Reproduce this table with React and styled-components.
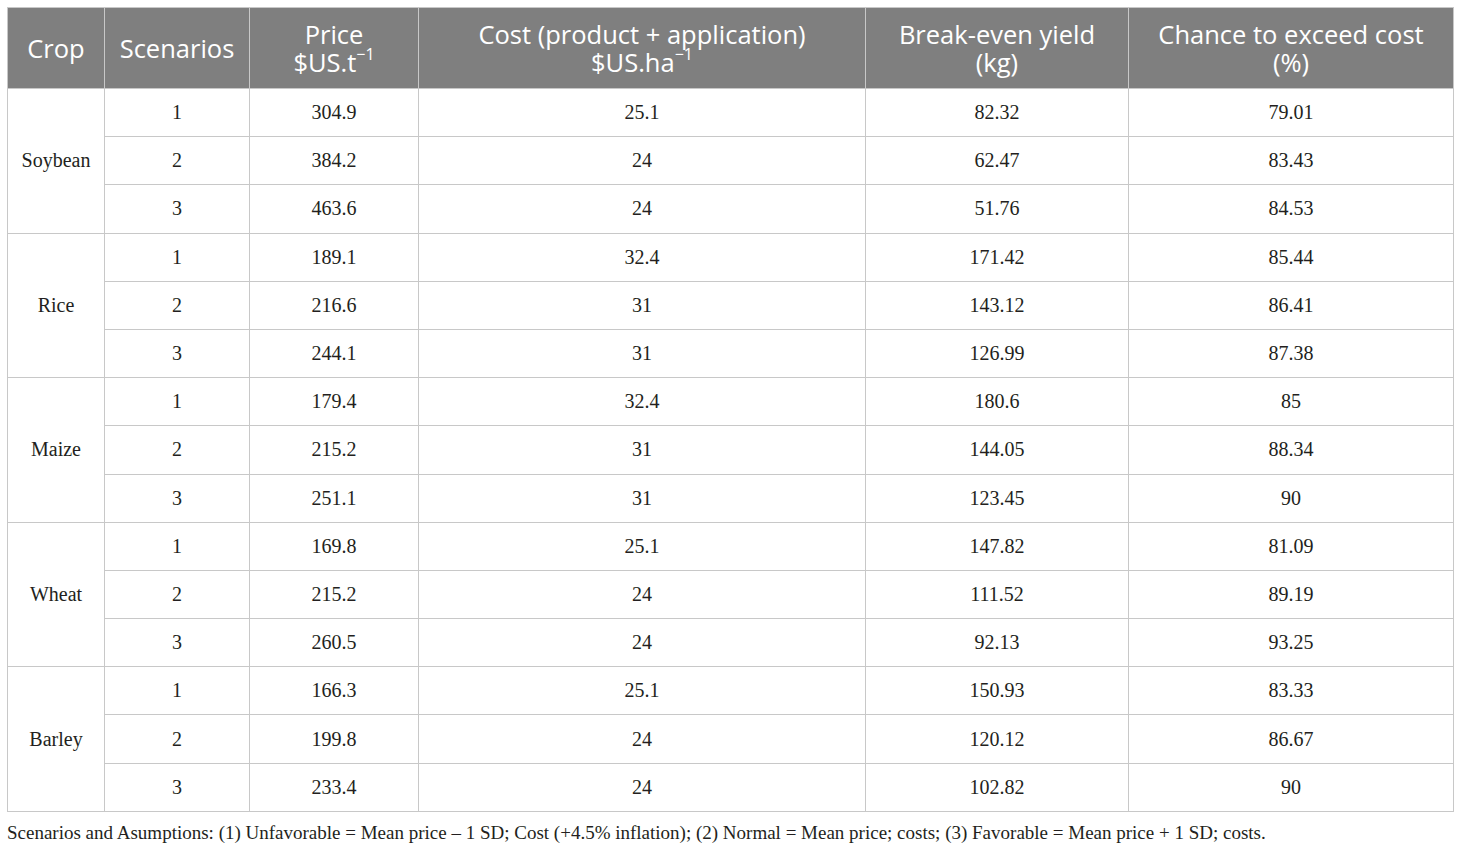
import React from 'react'
import styled, { createGlobalStyle } from 'styled-components'

const GlobalStyle = createGlobalStyle`
  html, body {
    margin: 0;
    padding: 0;
    background: #ffffff;
  }
`

const crops = [
  {
    name: 'Soybean',
    rows: [
      ['304.9', '25.1', '82.32', '79.01'],
      ['384.2', '24', '62.47', '83.43'],
      ['463.6', '24', '51.76', '84.53'],
    ],
  },
  {
    name: 'Rice',
    rows: [
      ['189.1', '32.4', '171.42', '85.44'],
      ['216.6', '31', '143.12', '86.41'],
      ['244.1', '31', '126.99', '87.38'],
    ],
  },
  {
    name: 'Maize',
    rows: [
      ['179.4', '32.4', '180.6', '85'],
      ['215.2', '31', '144.05', '88.34'],
      ['251.1', '31', '123.45', '90'],
    ],
  },
  {
    name: 'Wheat',
    rows: [
      ['169.8', '25.1', '147.82', '81.09'],
      ['215.2', '24', '111.52', '89.19'],
      ['260.5', '24', '92.13', '93.25'],
    ],
  },
  {
    name: 'Barley',
    rows: [
      ['166.3', '25.1', '150.93', '83.33'],
      ['199.8', '24', '120.12', '86.67'],
      ['233.4', '24', '102.82', '90'],
    ],
  },
]

const colWidths = [97, 145, 169, 447, 263, 325]

export default function App() {
  return (
    <Page>
      <GlobalStyle />
      <Table>
        <colgroup>
          {colWidths.map((w, i) => (
            <col key={i} style={{ width: w }} />
          ))}
        </colgroup>
        <thead>
          <HeadRow>
            <Th>Crop</Th>
            <Th>Scenarios</Th>
            <Th>
              <Line>Price</Line>
              <Line>
                $US.t<Sup>−1</Sup>
              </Line>
            </Th>
            <Th>
              <Line>Cost (product + application)</Line>
              <Line>
                $US.ha<Sup>−1</Sup>
              </Line>
            </Th>
            <Th>
              <Line>Break-even yield</Line>
              <Line>(kg)</Line>
            </Th>
            <Th>
              <Line>Chance to exceed cost</Line>
              <Line>(%)</Line>
            </Th>
          </HeadRow>
        </thead>
        <tbody>
          {crops.map((crop) =>
            crop.rows.map((row, i) => (
              <BodyRow key={crop.name + i}>
                {i === 0 && <Td rowSpan={3}>{crop.name}</Td>}
                <Td>{i + 1}</Td>
                {row.map((v, j) => (
                  <Td key={j}>{v}</Td>
                ))}
              </BodyRow>
            ))
          )}
        </tbody>
      </Table>
      <Footnote>
        Scenarios and Asumptions: (1) Unfavorable = Mean price – 1 SD; Cost (+4.5% inflation); (2) Normal = Mean
        price; costs; (3) Favorable = Mean price + 1 SD; costs.
      </Footnote>
    </Page>
  )
}

const Page = styled.div`
  padding: 7px;
  width: 1446px;
`

const Table = styled.table`
  width: 1446px;
  table-layout: fixed;
  border-collapse: collapse;
  border: 1px solid #c8c8c8;
`

const HeadRow = styled.tr`
  height: 81px;
  background: #7f7f7f;
`

const Th = styled.th`
  padding: 0 6px;
  color: #ffffff;
  font-family: 'Open Sans', 'Noto Sans', sans-serif;
  font-weight: 400;
  font-size: 25.5px;
  line-height: 28px;
  text-align: center;
  vertical-align: middle;
  border-left: 1px solid #c8c8c8;
  border-right: 1px solid #c8c8c8;
`

const Line = styled.span`
  display: block;
  white-space: nowrap;
`

const Sup = styled.span`
  display: inline-block;
  font-size: 16px;
  line-height: 16px;
  vertical-align: top;
  margin-top: -2px;
`

const BodyRow = styled.tr`
  height: 48.2px;
`

const Td = styled.td`
  padding: 0 8px;
  color: #231f20;
  font-family: 'Liberation Serif', 'Times New Roman', serif;
  font-size: 20px;
  text-align: center;
  vertical-align: middle;
  border: 1px solid #c8c8c8;
`

const Footnote = styled.p`
  margin: 10px 0 0;
  color: #231f20;
  font-family: 'Liberation Serif', 'Times New Roman', serif;
  font-size: 19px;
  line-height: 22px;
  white-space: nowrap;
`
